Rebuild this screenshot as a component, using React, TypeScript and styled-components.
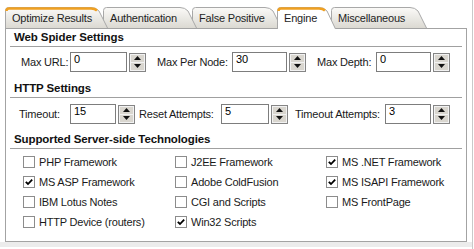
import React from "react";
import styled, { createGlobalStyle } from "styled-components";

const GlobalStyle = createGlobalStyle`
  html, body {
    margin: 0;
    padding: 0;
    background: #fff;
  }
  body {
    font-family: "Liberation Sans", Arial, sans-serif;
    font-size: 11px;
    letter-spacing: -0.2px;
    color: #1a1a1a;
  }
`;

const Page = styled.div`
  box-sizing: border-box;
  width: 473px;
  height: 249px;
  border-right: 1px solid #c9c9c9;
  display: flex;
  flex-direction: column;
`;

const Inner = styled.div`
  padding: 7px 5px 0 5px;
  display: flex;
  flex-direction: column;
`;

const TabStrip = styled.div`
  display: flex;
  height: 21px;
`;

const TabItem = styled.div<{ $w: number; $z: number; $first: boolean; $active: boolean }>`
  position: relative;
  flex: none;
  width: ${(p) => p.$w}px;
  height: ${(p) => (p.$active ? 22 : 21)}px;
  margin-left: ${(p) => (p.$first ? 0 : -5)}px;
  z-index: ${(p) => p.$z};
  line-height: 22px;
  padding-left: 7px;
  box-sizing: border-box;
  color: #1e1e1e;
  white-space: nowrap;

  & > svg {
    position: absolute;
    left: 0;
    top: 0;
  }
  & > span {
    position: relative;
  }
`;

const Panel = styled.div`
  box-sizing: border-box;
  height: 214px;
  border: 1px solid #a3a3a3;
  background: #fff;
  display: flex;
  flex-direction: column;
`;

const SectionHead = styled.div<{ $top: number }>`
  margin: ${(p) => p.$top}px 4px 0 4px;
  padding: 0 0 2px 4px;
  line-height: 14px;
  font-size: 11.5px;
  letter-spacing: -0.1px;
  font-weight: bold;
  color: #111;
  border-bottom: 1px solid #a0a0a0;
`;

const FieldRow = styled.div<{ $top: number; $indent: number }>`
  display: flex;
  align-items: center;
  height: 20px;
  margin-top: ${(p) => p.$top}px;
  padding-left: ${(p) => p.$indent}px;
`;

const Group = styled.div<{ $ml: number }>`
  display: flex;
  align-items: center;
  margin-left: ${(p) => p.$ml}px;
`;

const Label = styled.span<{ $w: number }>`
  width: ${(p) => p.$w}px;
  flex: none;
  color: #1a1a1a;
  white-space: nowrap;
`;

const Field = styled.div<{ $w: number }>`
  box-sizing: border-box;
  width: ${(p) => p.$w}px;
  height: 20px;
  border: 1px solid #7d7d7d;
  padding: 0 3px;
  line-height: 13px;
  color: #000;
  background: #fff;
`;

const Spinner = styled.div`
  box-sizing: border-box;
  width: 17px;
  height: 19px;
  margin-left: 2px;
  border: 1px solid #858585;
  display: flex;
  flex-direction: column;
  gap: 1px;
  background: #f2f2f2;
  padding: 1px;
`;

const SpinBtn = styled.div`
  flex: 1;
  background: #d9d6cf;
  display: flex;
  align-items: center;
  justify-content: center;
`;

const CheckGrid = styled.div`
  display: grid;
  grid-template-columns: 152px 151px 1fr;
  grid-auto-rows: 20px;
  margin-top: 3px;
  padding-left: 17px;
`;

const CheckItem = styled.label`
  display: flex;
  align-items: center;
  gap: 4px;
  color: #1a1a1a;
  white-space: nowrap;
`;

const Box = styled.span`
  box-sizing: border-box;
  width: 12px;
  height: 12px;
  border: 1px solid #8c8c8c;
  background: #fff;
  display: flex;
  align-items: center;
  justify-content: center;
`;

const Footer = styled.div`
  height: 5px;
  background: #ececec;
`;

type Tab = { label: string; w: number; hot?: boolean; active?: boolean };

const tabs: Tab[] = [
  { label: "Optimize Results", w: 103, hot: true },
  { label: "Authentication", w: 94 },
  { label: "False Positive", w: 90 },
  { label: "Engine", w: 59, active: true },
  { label: "Miscellaneous", w: 96 },
];

const TabShape = ({ w, active, hot, id }: { w: number; active?: boolean; hot?: boolean; id: string }) => {
  const h = active ? 22 : 21;
  const s = 13;
  const edge = `M0.5,${h} V3.5 Q0.5,0.5 3.5,0.5 H${w - s - 4} Q${w - s + 1},0.5 ${w - s + 4},4 L${w - 0.5},${h}`;
  return (
    <svg width={w} height={h} viewBox={`0 0 ${w} ${h}`}>
      <defs>
        <linearGradient id={id} x1="0" y1="0" x2="0" y2="1">
          <stop offset="0" stopColor="#fbfaf8" />
          <stop offset="1" stopColor="#dbd9d2" />
        </linearGradient>
      </defs>
      <path d={edge + " Z"} fill={active ? "#fff" : `url(#${id})`} stroke="none" />
      <path d={edge} fill="none" stroke="#a8a8a8" strokeWidth="1" />
      {(active || hot) && (
        <path
          d={`M1.5,4 Q1.5,1.5 4,1.5 H${w - s - 4} Q${w - s},1.5 ${w - s + 2},3.5`}
          fill="none"
          stroke="#f0a020"
          strokeWidth="2.5"
        />
      )}
    </svg>
  );
};

const Arrow = ({ up }: { up?: boolean }) => (
  <svg width="7" height="4" viewBox="0 0 7 4">
    <path d={up ? "M3.5,0 L7,4 L0,4 Z" : "M0,0 L7,0 L3.5,4 Z"} fill="#111" />
  </svg>
);

const Spin = () => (
  <Spinner>
    <SpinBtn>
      <Arrow up />
    </SpinBtn>
    <SpinBtn>
      <Arrow />
    </SpinBtn>
  </Spinner>
);

type Num = { label: string; labelW: number; inputW: number; value: string; ml: number };

const NumField = ({ label, labelW, inputW, value, ml }: Num) => (
  <Group $ml={ml}>
    <Label $w={labelW}>{label}</Label>
    <Field $w={inputW}>{value}</Field>
    <Spin />
  </Group>
);

const spider: Num[] = [
  { label: "Max URL:", labelW: 49, inputW: 57, value: "0", ml: 0 },
  { label: "Max Per Node:", labelW: 75, inputW: 55, value: "30", ml: 11 },
  { label: "Max Depth:", labelW: 59, inputW: 55, value: "0", ml: 11 },
];

const http: Num[] = [
  { label: "Timeout:", labelW: 51, inputW: 46, value: "15", ml: 0 },
  { label: "Reset Attempts:", labelW: 82, inputW: 48, value: "5", ml: 4 },
  { label: "Timeout Attempts:", labelW: 90, inputW: 46, value: "3", ml: 7 },
];

const techs: { name: string; on: boolean }[] = [
  { name: "PHP Framework", on: false },
  { name: "J2EE Framework", on: false },
  { name: "MS .NET Framework", on: true },
  { name: "MS ASP Framework", on: true },
  { name: "Adobe ColdFusion", on: false },
  { name: "MS ISAPI Framework", on: true },
  { name: "IBM Lotus Notes", on: false },
  { name: "CGI and Scripts", on: false },
  { name: "MS FrontPage", on: false },
  { name: "HTTP Device (routers)", on: false },
  { name: "Win32 Scripts", on: true },
];

const Check = ({ on }: { on: boolean }) => (
  <Box>
    {on && (
      <svg width="8" height="8" viewBox="0 0 8 8">
        <path d="M0.8,3.8 L3,6 L7.2,1.6" fill="none" stroke="#000" strokeWidth="1.8" />
      </svg>
    )}
  </Box>
);

export default function App() {
  return (
    <Page>
      <GlobalStyle />
      <Inner>
        <TabStrip>
          {tabs.map((t, i) => (
            <TabItem
              key={t.label}
              $w={t.w}
              $z={t.active ? 20 : 10 - i}
              $first={i === 0}
              $active={!!t.active}
            >
              <TabShape w={t.w} active={t.active} hot={t.hot} id={`tabgrad${i}`} />
              <span>{t.label}</span>
            </TabItem>
          ))}
        </TabStrip>
        <Panel>
          <SectionHead $top={1}>Web Spider Settings</SectionHead>
          <FieldRow $top={5} $indent={15}>
            {spider.map((f) => (
              <NumField key={f.label} {...f} />
            ))}
          </FieldRow>
          <SectionHead $top={9}>HTTP Settings</SectionHead>
          <FieldRow $top={6} $indent={13}>
            {http.map((f) => (
              <NumField key={f.label} {...f} />
            ))}
          </FieldRow>
          <SectionHead $top={8}>Supported Server-side Technologies</SectionHead>
          <CheckGrid>
            {techs.map((t) => (
              <CheckItem key={t.name}>
                <Check on={t.on} />
                {t.name}
              </CheckItem>
            ))}
          </CheckGrid>
        </Panel>
      </Inner>
      <Footer />
    </Page>
  );
}
